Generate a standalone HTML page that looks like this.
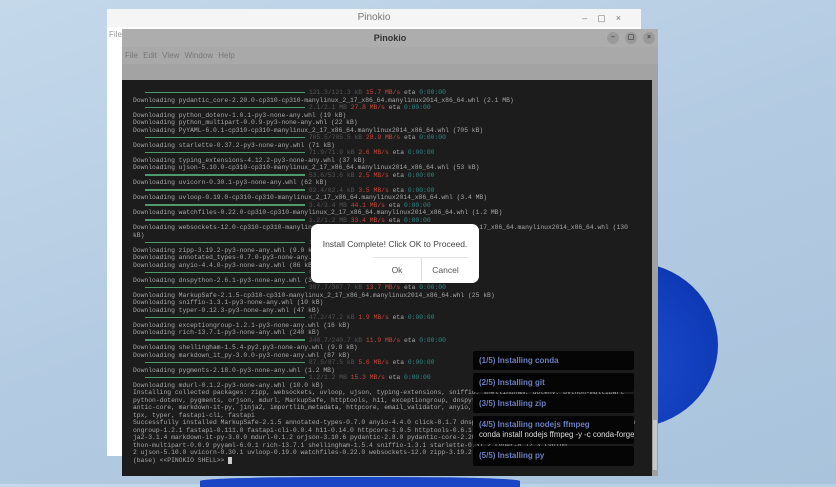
<!DOCTYPE html>
<html><head><meta charset="utf-8"><style>
*{margin:0;padding:0;box-sizing:border-box}
body{width:836px;height:484px;overflow:hidden;position:relative;font-family:"Liberation Sans",sans-serif;background:linear-gradient(160deg,#c4d8ea 0%,#b3cbe2 50%,#a9c3dc 100%)}
.bloom{position:absolute;left:560px;top:262px;width:158px;height:166px;border-radius:0 90px 90px 0/0 85px 85px 0;background:radial-gradient(ellipse at 30% 60%,#1f4fd0,#0f3bb8 70%,#0a2c94)}
.bloom2{position:absolute;left:200px;top:477px;width:320px;height:10px;background:#1a46c4;border-radius:40% 40% 0 0}
.back{position:absolute;left:107px;top:9px;width:534px;height:447px;background:#fff;border-radius:6px 6px 0 0}
.back .t{height:18px;background:#f5f5f5;text-align:center;font-size:10px;color:#777;line-height:18px}
.back .c{position:absolute;right:10px;top:0;font-size:9px;color:#777;line-height:18px;letter-spacing:10px}
.back .f{position:absolute;left:2px;top:21px;font-size:8px;color:#999}
.front{position:absolute;left:122px;top:29px;width:536px;height:447px;background:#a8a8a8}
.tb{height:18px;text-align:center;font-size:9px;font-weight:bold;color:#333;line-height:18px;background:#adadad}
.btns{position:absolute;right:3px;top:3px;display:flex;gap:6px}
.btns span{width:12px;height:12px;border-radius:50%;background:#9a9a9a;font-size:7px;line-height:12px;text-align:center;color:#444}
.menu{height:17px;font-size:8px;color:#777;line-height:17px;padding-left:3px;word-spacing:3px;background:#a9a9a9}
.strip{height:16px;background:#a3a3a3}
.term{position:absolute;left:0;top:51px;width:530px;height:396px;background:#1c1c1c;overflow:hidden}
.sb{position:absolute;left:530px;top:51px;width:6px;height:396px;background:#a0a0a0}
.sb i{position:absolute;left:1px;top:340px;width:4px;height:50px;background:#c8c8c8}
pre{position:absolute;left:11px;top:9px;font-family:"Liberation Mono",monospace;font-size:6.35px;line-height:7.5px;color:#a8a8a8;white-space:pre}
.g{display:inline-block;width:160px;height:1.5px;background:#4f9a6a;vertical-align:middle;margin-left:12px}
.d{color:#555}.r{color:#c9473a}.cy{color:#2f8a87}
.dlg{position:absolute;left:311px;top:224px;width:168px;height:59px;background:#fff;border-radius:7px}
.dlg p{font-size:8.5px;color:#444;text-align:center;margin-top:15px}
.ok,.cn{position:absolute;top:33px;height:24px;font-size:8.5px;color:#555;line-height:24px;text-align:center;border-top:1px solid #e4e4e4}
.ok{left:62px;width:48px}.cn{left:110px;width:48px;border-left:1px solid #ddd}
.nt{position:absolute;left:473px;width:161px;background:#050505;border-radius:2px;font-size:8px;color:#6a7fc2;font-weight:bold;padding-left:6px;white-space:nowrap;overflow:hidden}
.nt b{font-weight:normal;color:#ddd;display:block;font-size:7.8px}
</style></head><body>
<div class="bloom"></div><div class="bloom2"></div>
<div class="back"><div class="t">Pinokio</div><div class="c">–▢×</div><div class="f">File</div></div>
<div class="front">
<div class="tb">Pinokio<div class="btns"><span>–</span><span>▢</span><span>×</span></div></div>
<div class="menu">File Edit View Window Help</div>
<div class="strip"></div>
<div class="term"><pre><span class="g"></span> <span class="d">121.3/121.3 kB</span> <span class="r">15.7 MB/s</span> eta <span class="cy">0:00:00</span>
Downloading pydantic_core-2.20.0-cp310-cp310-manylinux_2_17_x86_64.manylinux2014_x86_64.whl (2.1 MB)
<span class="g"></span> <span class="d">2.1/2.1 MB</span> <span class="r">27.8 MB/s</span> eta <span class="cy">0:00:00</span>
Downloading python_dotenv-1.0.1-py3-none-any.whl (19 kB)
Downloading python_multipart-0.0.9-py3-none-any.whl (22 kB)
Downloading PyYAML-6.0.1-cp310-cp310-manylinux_2_17_x86_64.manylinux2014_x86_64.whl (705 kB)
<span class="g"></span> <span class="d">705.5/705.5 kB</span> <span class="r">28.9 MB/s</span> eta <span class="cy">0:00:00</span>
Downloading starlette-0.37.2-py3-none-any.whl (71 kB)
<span class="g"></span> <span class="d">71.9/71.9 kB</span> <span class="r">2.6 MB/s</span> eta <span class="cy">0:00:00</span>
Downloading typing_extensions-4.12.2-py3-none-any.whl (37 kB)
Downloading ujson-5.10.0-cp310-cp310-manylinux_2_17_x86_64.manylinux2014_x86_64.whl (53 kB)
<span class="g"></span> <span class="d">53.6/53.6 kB</span> <span class="r">2.5 MB/s</span> eta <span class="cy">0:00:00</span>
Downloading uvicorn-0.30.1-py3-none-any.whl (62 kB)
<span class="g"></span> <span class="d">62.4/62.4 kB</span> <span class="r">3.5 MB/s</span> eta <span class="cy">0:00:00</span>
Downloading uvloop-0.19.0-cp310-cp310-manylinux_2_17_x86_64.manylinux2014_x86_64.whl (3.4 MB)
<span class="g"></span> <span class="d">3.4/3.4 MB</span> <span class="r">44.1 MB/s</span> eta <span class="cy">0:00:00</span>
Downloading watchfiles-0.22.0-cp310-cp310-manylinux_2_17_x86_64.manylinux2014_x86_64.whl (1.2 MB)
<span class="g"></span> <span class="d">1.2/1.2 MB</span> <span class="r">33.4 MB/s</span> eta <span class="cy">0:00:00</span>
Downloading websockets-12.0-cp310-cp310-manylinux_2_5_x86_64.manylinux1_x86_64.manylinux_2_17_x86_64.manylinux2014_x86_64.whl (130
kB)
<span class="g"></span> <span class="d">130.2/130.2 kB</span> <span class="r">8.1 MB/s</span> eta <span class="cy">0:00:00</span>
Downloading zipp-3.19.2-py3-none-any.whl (9.0 kB)
Downloading annotated_types-0.7.0-py3-none-any.whl (13 kB)
Downloading anyio-4.4.0-py3-none-any.whl (86 kB)
<span class="g"></span> <span class="d">86.8/86.8 kB</span> <span class="r">4.4 MB/s</span> eta <span class="cy">0:00:00</span>
Downloading dnspython-2.6.1-py3-none-any.whl (307 kB)
<span class="g"></span> <span class="d">307.7/307.7 kB</span> <span class="r">13.7 MB/s</span> eta <span class="cy">0:00:00</span>
Downloading MarkupSafe-2.1.5-cp310-cp310-manylinux_2_17_x86_64.manylinux2014_x86_64.whl (25 kB)
Downloading sniffio-1.3.1-py3-none-any.whl (10 kB)
Downloading typer-0.12.3-py3-none-any.whl (47 kB)
<span class="g"></span> <span class="d">47.2/47.2 kB</span> <span class="r">1.9 MB/s</span> eta <span class="cy">0:00:00</span>
Downloading exceptiongroup-1.2.1-py3-none-any.whl (16 kB)
Downloading rich-13.7.1-py3-none-any.whl (240 kB)
<span class="g"></span> <span class="d">240.7/240.7 kB</span> <span class="r">11.9 MB/s</span> eta <span class="cy">0:00:00</span>
Downloading shellingham-1.5.4-py2.py3-none-any.whl (9.8 kB)
Downloading markdown_it_py-3.0.0-py3-none-any.whl (87 kB)
<span class="g"></span> <span class="d">87.5/87.5 kB</span> <span class="r">5.6 MB/s</span> eta <span class="cy">0:00:00</span>
Downloading pygments-2.18.0-py3-none-any.whl (1.2 MB)
<span class="g"></span> <span class="d">1.2/1.2 MB</span> <span class="r">15.3 MB/s</span> eta <span class="cy">0:00:00</span>
Downloading mdurl-0.1.2-py3-none-any.whl (10.0 kB)
Installing collected packages: zipp, websockets, uvloop, ujson, typing-extensions, sniffio, shellingham, dotenv, python-multipart
python-dotenv, pygments, orjson, mdurl, MarkupSafe, httptools, h11, exceptiongroup, dnspython, annotated-types, pyd
antic-core, markdown-it-py, jinja2, importlib_metadata, httpcore, email_validator, anyio, watchfiles, starlette, rich
tpx, typer, fastapi-cli, fastapi
Successfully installed MarkupSafe-2.1.5 annotated-types-0.7.0 anyio-4.4.0 click-8.1.7 dnspython-2.6.1 email_validator-2.2.0 exceptio
ongroup-1.2.1 fastapi-0.111.0 fastapi-cli-0.0.4 h11-0.14.0 httpcore-1.0.5 httptools-0.6.1 httpx-0.27.0 idna-3.7 jin
ja2-3.1.4 markdown-it-py-3.0.0 mdurl-0.1.2 orjson-3.10.6 pydantic-2.8.0 pydantic-core-2.20.0 python-dotenv-1.0.1 py
thon-multipart-0.0.9 pyyaml-6.0.1 rich-13.7.1 shellingham-1.5.4 sniffio-1.3.1 starlette-0.37.2 typer-0.12.3 typing
2 ujson-5.10.0 uvicorn-0.30.1 uvloop-0.19.0 watchfiles-0.22.0 websockets-12.0 zipp-3.19.2
(base) &lt;&lt;PINOKIO SHELL&gt;&gt; <span style="background:#ccc">&nbsp;</span></pre></div>
<div class="sb"><i></i></div>
</div>
<div class="dlg"><p>Install Complete! Click OK to Proceed.</p><div class="ok">Ok</div><div class="cn">Cancel</div></div>
<div class="nt" style="top:351px;height:19px;line-height:19px">(1/5) Installing conda</div>
<div class="nt" style="top:373px;height:19px;line-height:19px">(2/5) Installing git</div>
<div class="nt" style="top:394px;height:19px;line-height:19px">(3/5) Installing zip</div>
<div class="nt" style="top:416px;height:28px;padding-top:4px;line-height:10px">(4/5) Installing nodejs ffmpeg<b>conda install nodejs ffmpeg -y -c conda-forge</b></div>
<div class="nt" style="top:446px;height:20px;line-height:20px">(5/5) Installing py</div>
</body></html>
